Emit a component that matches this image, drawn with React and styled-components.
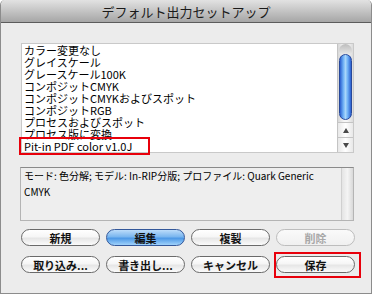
import React from 'react'
import styled, { createGlobalStyle, css } from 'styled-components'

const GlobalStyle = createGlobalStyle`
    body {
        margin: 0;
        background: #ffffff;
        font-family: "Noto Sans CJK JP", "Liberation Sans", sans-serif;
    }
`

const Window = styled.div`
    position: relative;
    width: 372px;
    height: 294px;
    box-sizing: border-box;
    background: #ececec;
    border: 1px solid #8c8c8c;
    border-top: none;
    border-radius: 5px 5px 0 0;
    display: flex;
    flex-direction: column;
    overflow: hidden;
`

const TitleBar = styled.div`
    height: 22px;
    flex-shrink: 0;
    display: flex;
    align-items: center;
    justify-content: center;
    background: linear-gradient(#e2e2e2, #c4c4c4 50%, #a6a6a6);
    border-bottom: 1px solid #5c5c5c;
    border-radius: 5px 5px 0 0;
    font-size: 13px;
    color: #1a1a1a;
`

const Body = styled.div`
    padding: 20px 0 0 19px;
    display: flex;
    flex-direction: column;
`

const ListBox = styled.div`
    margin-left: 1px;
    width: 333px;
    height: 110px;
    box-sizing: border-box;
    display: flex;
    background: #ffffff;
    border: 1px solid #c9c9c9;
`

const Items = styled.div`
    flex: 1;
    padding: 0 0 0 2px;
    overflow: hidden;
`

const Item = styled.div`
    font-size: 11px;
    line-height: 12px;
    height: 12px;
    white-space: nowrap;
    color: #000;
`

const ScrollBar = styled.div`
    width: 15px;
    display: flex;
    flex-direction: column;
    background: linear-gradient(90deg, #d8d8d8, #f6f6f6 40%, #f6f6f6 60%, #dcdcdc);
    border-left: 1px solid #c4c4c4;
`

const TrackCap = styled.div`
    height: 10px;
    border-radius: 7px 7px 0 0;
    background: linear-gradient(#bcbcbc, #e6e6e6);
    margin: 0 1px;
`

const Thumb = styled.div`
    height: 66px;
    margin: 0 1px;
    box-sizing: border-box;
    border-radius: 7px;
    border: 1px solid #27489a;
    background: linear-gradient(90deg, #2b5fd0, #6eb0f5 30%, #a8d6fb 50%, #6eb0f5 70%, #2b5fd0);
`

const TrackRest = styled.div`
    flex: 1;
`

const Arrow = styled.div`
    height: 14px;
    display: flex;
    align-items: center;
    justify-content: center;
    border-top: 1px solid #c4c4c4;
    background: linear-gradient(90deg, #e8e8e8, #ffffff 50%, #e8e8e8);
    &::after {
        content: '';
        border-left: 3px solid transparent;
        border-right: 3px solid transparent;
        ${p => p.$down
            ? css`border-top: 5px solid #4a4a4a;`
            : css`border-bottom: 5px solid #4a4a4a;`}
    }
`

const DescBox = styled.div`
    margin-top: 14px;
    width: 334px;
    height: 54px;
    box-sizing: border-box;
    display: flex;
    background: #eeeeee;
    border: 1px solid #b4b4b4;
    border-top-color: #8a8a8a;
`

const DescText = styled.div`
    flex: 1;
    padding: 0 4px 0 3px;
    font-size: 10px;
    line-height: 16px;
    color: #000;
`

const DescStrip = styled.div`
    width: 11px;
    background: linear-gradient(90deg, #e4e4e4, #f4f4f4 50%, #d8d8d8);
    border-left: 1px solid #d0d0d0;
`

const Buttons = styled.div`
    margin: 8px 0 0 1px;
    display: grid;
    grid-template-columns: repeat(4, 79px);
    column-gap: 6px;
    row-gap: 10px;
`

const Button = styled.div`
    height: 17px;
    box-sizing: border-box;
    border-radius: 9px;
    display: flex;
    align-items: center;
    justify-content: center;
    font-size: 11px;
    font-weight: bold;
    color: #111;
    border: 1px solid #6a6a6a;
    background: linear-gradient(#ffffff, #f6f6f6 45%, #e6e6e6 55%, #fbfbfb);
    ${p => p.$primary && css`
        border-color: #34589a;
        background: linear-gradient(#bcdcfa, #7ab6ef 45%, #4d98e6 55%, #9fd2fb);
    `}
    ${p => p.$disabled && css`
        border-color: #bdbdbd;
        color: #a8a8a8;
        background: linear-gradient(#fafafa, #f0f0f0);
    `}
`

const Highlight = styled.div`
    position: absolute;
    box-sizing: border-box;
    border: 2px solid #e8000b;
    pointer-events: none;
`

const presets = [
    'カラー変更なし',
    'グレイスケール',
    'グレースケール100K',
    'コンポジットCMYK',
    'コンポジットCMYKおよびスポット',
    'コンポジットRGB',
    'プロセスおよびスポット',
    'プロセス版に変換',
    'Pit-in PDF color v1.0J',
]

const App = () => {
    return (
        <>
            <GlobalStyle />
            <Window>
                <TitleBar>デフォルト出力セットアップ</TitleBar>
                <Body>
                    <ListBox>
                        <Items>
                            {presets.map(p => <Item key={p}>{p}</Item>)}
                        </Items>
                        <ScrollBar>
                            <TrackCap />
                            <Thumb />
                            <TrackRest />
                            <Arrow />
                            <Arrow $down />
                        </ScrollBar>
                    </ListBox>
                    <DescBox>
                        <DescText>モード: 色分解; モデル: In-RIP分版; プロファイル: Quark Generic CMYK</DescText>
                        <DescStrip />
                    </DescBox>
                    <Buttons>
                        <Button>新規</Button>
                        <Button $primary>編集</Button>
                        <Button>複製</Button>
                        <Button $disabled>削除</Button>
                        <Button>取り込み...</Button>
                        <Button>書き出し...</Button>
                        <Button>キャンセル</Button>
                        <Button>保存</Button>
                    </Buttons>
                </Body>
                <Highlight style={{ left: 18, top: 137, width: 131, height: 18 }} />
                <Highlight style={{ left: 273, top: 252, width: 87, height: 26 }} />
            </Window>
        </>
    )
}

export default App
